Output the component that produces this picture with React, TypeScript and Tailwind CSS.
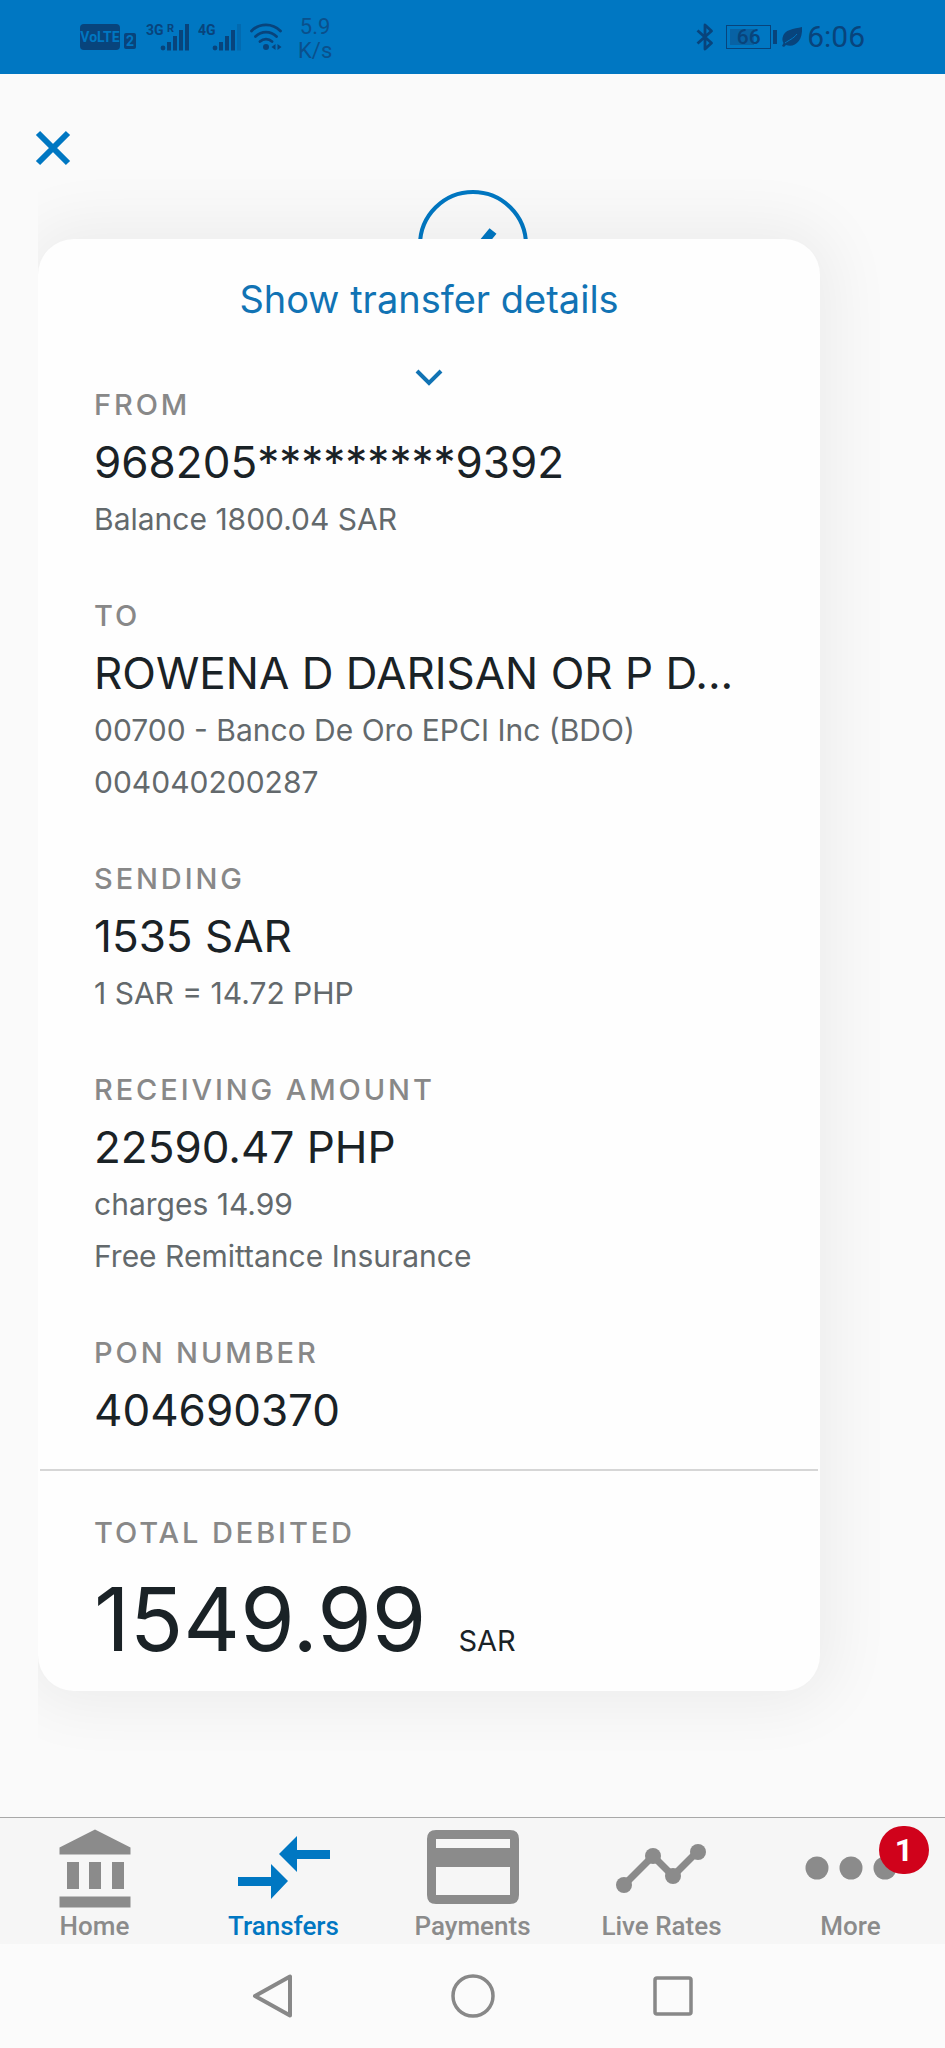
import type { ReactNode } from "react";

interface Entry {
  label: string;
  value: string;
  notes: string[];
}

const entries: Entry[] = [
  { label: "FROM", value: "968205*********9392", notes: ["Balance 1800.04 SAR"] },
  {
    label: "TO",
    value: "ROWENA D DARISAN OR P D...",
    notes: ["00700 - Banco De Oro EPCI Inc (BDO)", "004040200287"],
  },
  { label: "SENDING", value: "1535 SAR", notes: ["1 SAR = 14.72 PHP"] },
  {
    label: "RECEIVING AMOUNT",
    value: "22590.47 PHP",
    notes: ["charges 14.99", "Free Remittance Insurance"],
  },
  { label: "PON NUMBER", value: "404690370", notes: [] },
];

function Signal({ network, roaming, weak }: { network: string; roaming?: boolean; weak?: boolean }) {
  return (
    <svg className="h-7 w-11" viewBox="0 0 44 28" fill="currentColor">
      <text x="0" y="12" fontSize="14" fontWeight="700">{network}</text>
      {roaming && <text x="21" y="9" fontSize="11" fontWeight="700">R</text>}
      <circle cx="17" cy="25" r="2.4" />
      <rect x="21" y="19" width="4" height="8.500" />
      <rect x="27" y="13" width="4" height="14.500" />
      <rect x="33" y="7" width="4" height="20.500" />
      <rect x="39" y="1" width="4" height="26.500" opacity={weak ? 0.25 : 1} />
    </svg>
  );
}

function StatusBar() {
  return (
    <header className="flex h-[74px] items-center justify-between bg-[#0077c2] px-20 text-[#08447c]">
      <div className="flex items-center">
        <span className="flex h-[26px] w-10 items-center justify-center rounded bg-[#08447c] text-[14px] font-bold text-[#0077c2]">
          VoLTE
        </span>
        <span className="mt-2 ml-1 flex h-4 w-3 items-center justify-center rounded-xs bg-[#08447c] text-[14px] font-bold text-[#0077c2]">
          2
        </span>
        <div className="ml-[10px] flex gap-2">
          <Signal network="3G" roaming />
          <Signal network="4G" weak />
          <svg className="h-7 w-8" viewBox="0 0 32 28" fill="none" stroke="currentColor" strokeWidth="2.800" strokeLinecap="round">
            <path d="M1.500 8C9.500-.2 22.500-.2 30.500 8M5.500 13.500c6-5.800 15-5.800 21 0M10 18.500c3.500-3.200 8.500-3.200 12 0" />
            <circle cx="16" cy="24" r="3" fill="currentColor" stroke="none" />
            <path d="M25.500 21v6l-4-3zM27.500 21v6l4-3z" fill="currentColor" stroke="none" />
          </svg>
        </div>
        <div className="mt-1 ml-4 text-center text-[22px] leading-6 text-[#0a508c]">
          <div>5.9</div>
          <div>K/s</div>
        </div>
      </div>
      <div className="flex items-center">
        <svg className="h-7 w-[18px]" viewBox="0 0 18 28" fill="none" stroke="currentColor" strokeWidth="2.800" strokeLinejoin="round">
          <path d="M1.500 7.500 15.500 20 9 26V2l6.500 6L1.500 20.500" />
        </svg>
        <div className="ml-3 flex h-6 w-[45px] items-center justify-center border border-current bg-[#0077c2] p-[3px]">
          <span className="flex h-full w-full items-center justify-center bg-linear-to-r from-[#0862a4] from-66% to-[#0077c2] to-66% text-[21px] leading-5 font-medium">
            66
          </span>
        </div>
        <div className="ml-[2px] h-[14px] w-1 bg-current" />
        <svg className="ml-1 h-[22px] w-[22px]" viewBox="0 0 22 22">
          <path d="M21 1C13 3 3 3 1.500 12c-.3 2 .3 4 1 5L1 20l2 1 2-2c8 3 17-3 16-18z" fill="currentColor" />
          <path d="M4 17c4-3 8-4 12-9" fill="none" stroke="#0077c2" strokeWidth="1" />
        </svg>
        <time className="ml-1 text-[30px] leading-9">6:06</time>
      </div>
    </header>
  );
}

function TransferEntry({ label, value, notes }: Entry) {
  return (
    <section>
      <h2 className="text-[29px] leading-[52px] font-medium tracking-widest text-[#888888]">{label}</h2>
      <p className="truncate text-[44px] leading-[62px] text-[#1a2226]">{value}</p>
      {notes.map((note) => (
        <p key={note} className="text-[30px] leading-[52px] text-[#63696c]">{note}</p>
      ))}
    </section>
  );
}

function Tab({ label, active, badge, children }: { label: string; active?: boolean; badge?: string; children: ReactNode }) {
  return (
    <a
      href="#"
      className={
        active
          ? "relative flex flex-1 flex-col items-center text-[#0077c2]"
          : "relative flex flex-1 flex-col items-center text-[#8b8b8b]"
      }
    >
      <svg className="mt-2 h-[84px] w-24" viewBox="0 0 96 84" fill="currentColor">{children}</svg>
      <span className="text-[26px] leading-8 font-medium">{label}</span>
      {badge && (
        <span className="absolute top-2 right-4 flex h-12 w-[50px] items-center justify-center rounded-full bg-[#d0021b] text-[32px] font-bold text-white">
          {badge}
        </span>
      )}
    </a>
  );
}

export default function App() {
  return (
    <div className="flex min-h-screen flex-col bg-[#fafafa] font-['Roboto',sans-serif]">
      <StatusBar />

      <main className="flex-1 font-['Inter',sans-serif]">
        <button type="button" aria-label="Close" className="mt-14 ml-[34px] block text-[#0077c2]">
          <svg className="h-9 w-[38px]" viewBox="0 0 38 36" fill="none" stroke="currentColor" strokeWidth="6">
            <path d="m4 3 30 30M34 3 4 33" />
          </svg>
        </button>

        <div className="mx-[38px] overflow-hidden pt-6 pb-20">
          <svg className="mx-auto h-[110px] w-[110px] text-[#0077c2]" viewBox="0 0 110 110" fill="none" stroke="currentColor">
            <circle cx="55" cy="55" r="53" strokeWidth="4" />
            <path d="m32 60 15 15 28-34" strokeWidth="9" />
          </svg>

          <article className="relative -mt-[61px] w-9/10 rounded-[36px] bg-[#fefefe] pt-[34px] pb-5 shadow-[0_0_64px_14px_rgba(0,0,0,0.06)]">
            <button type="button" className="flex w-full flex-col items-center gap-11 text-[#1173b4]">
              <span className="text-[38px] leading-[52px]">Show transfer details</span>
              <svg className="h-[18px] w-7" viewBox="0 0 28 18" fill="none" stroke="currentColor" strokeWidth="4">
                <path d="m2 2 12 12L26 2" />
              </svg>
            </button>

            <div className="-mt-2 flex flex-col gap-[45px] px-14 pb-7">
              {entries.map((entry) => (
                <TransferEntry key={entry.label} {...entry} />
              ))}
            </div>

            <section className="mx-[2px] border-t-2 border-[#d6d6d6] px-[54px] pt-9">
              <h2 className="text-[29px] leading-[52px] font-medium tracking-widest text-[#888888]">TOTAL DEBITED</h2>
              <p className="mt-2 flex items-baseline gap-8 text-[#1a2226]">
                <span className="text-[88px] leading-[104px]">1549.99</span>
                <span className="text-[29px]">SAR</span>
              </p>
            </section>
          </article>
        </div>
      </main>

      <nav className="flex h-[127px] border-t border-[#a8a8a8] bg-[#f6f6f6]">
        <Tab label="Home">
          <path d="M12.500 21.500 48 3.500l35.500 18v7h-71zM20 36h12v27H20zM42 36h12v27H42zM65 36h12v27H65zM12.500 70.500h71v11h-71z" />
        </Tab>
        <Tab label="Transfers" active>
          <path d="M94 24H61V10L43 28l18 18V33h33zM2 51h33V38l17 17-17 18V60H2z" />
        </Tab>
        <Tab label="Payments">
          <path fillRule="evenodd" d="M11 4h74q9 0 9 9v56q0 9-9 9H11q-9 0-9-9V13q0-9 9-9zM11 13h74v9H11zM11 41h74v28H11z" />
        </Tab>
        <Tab label="Live Rates">
          <path d="M10 59 39 30l20 20 25-25" fill="none" stroke="currentColor" strokeWidth="7" />
          <circle cx="10" cy="59" r="8" />
          <circle cx="39" cy="30" r="8" />
          <circle cx="59" cy="50" r="8" />
          <circle cx="84" cy="26" r="8" />
        </Tab>
        <Tab label="More" badge="1">
          <circle cx="14" cy="42" r="11.500" />
          <circle cx="48" cy="42" r="11.500" />
          <circle cx="82" cy="42" r="11.500" />
        </Tab>
      </nav>

      <footer className="flex h-[104px] items-center justify-center gap-[156px] bg-[#fbfbfb] text-[#888888]">
        <button type="button" aria-label="Back">
          <svg className="h-11 w-11" viewBox="0 0 44 44" fill="none" stroke="currentColor" strokeWidth="4" strokeLinejoin="round">
            <path d="M39 2.500v39L4 22z" />
          </svg>
        </button>
        <button type="button" aria-label="Home screen">
          <svg className="h-11 w-11" viewBox="0 0 44 44" fill="none" stroke="currentColor" strokeWidth="3.500">
            <circle cx="22" cy="22" r="20" />
          </svg>
        </button>
        <button type="button" aria-label="Recent apps">
          <svg className="h-11 w-11" viewBox="0 0 44 44" fill="none" stroke="currentColor" strokeWidth="3.500">
            <rect x="4" y="4" width="36" height="36" rx="2" />
          </svg>
        </button>
      </footer>
    </div>
  );
}
